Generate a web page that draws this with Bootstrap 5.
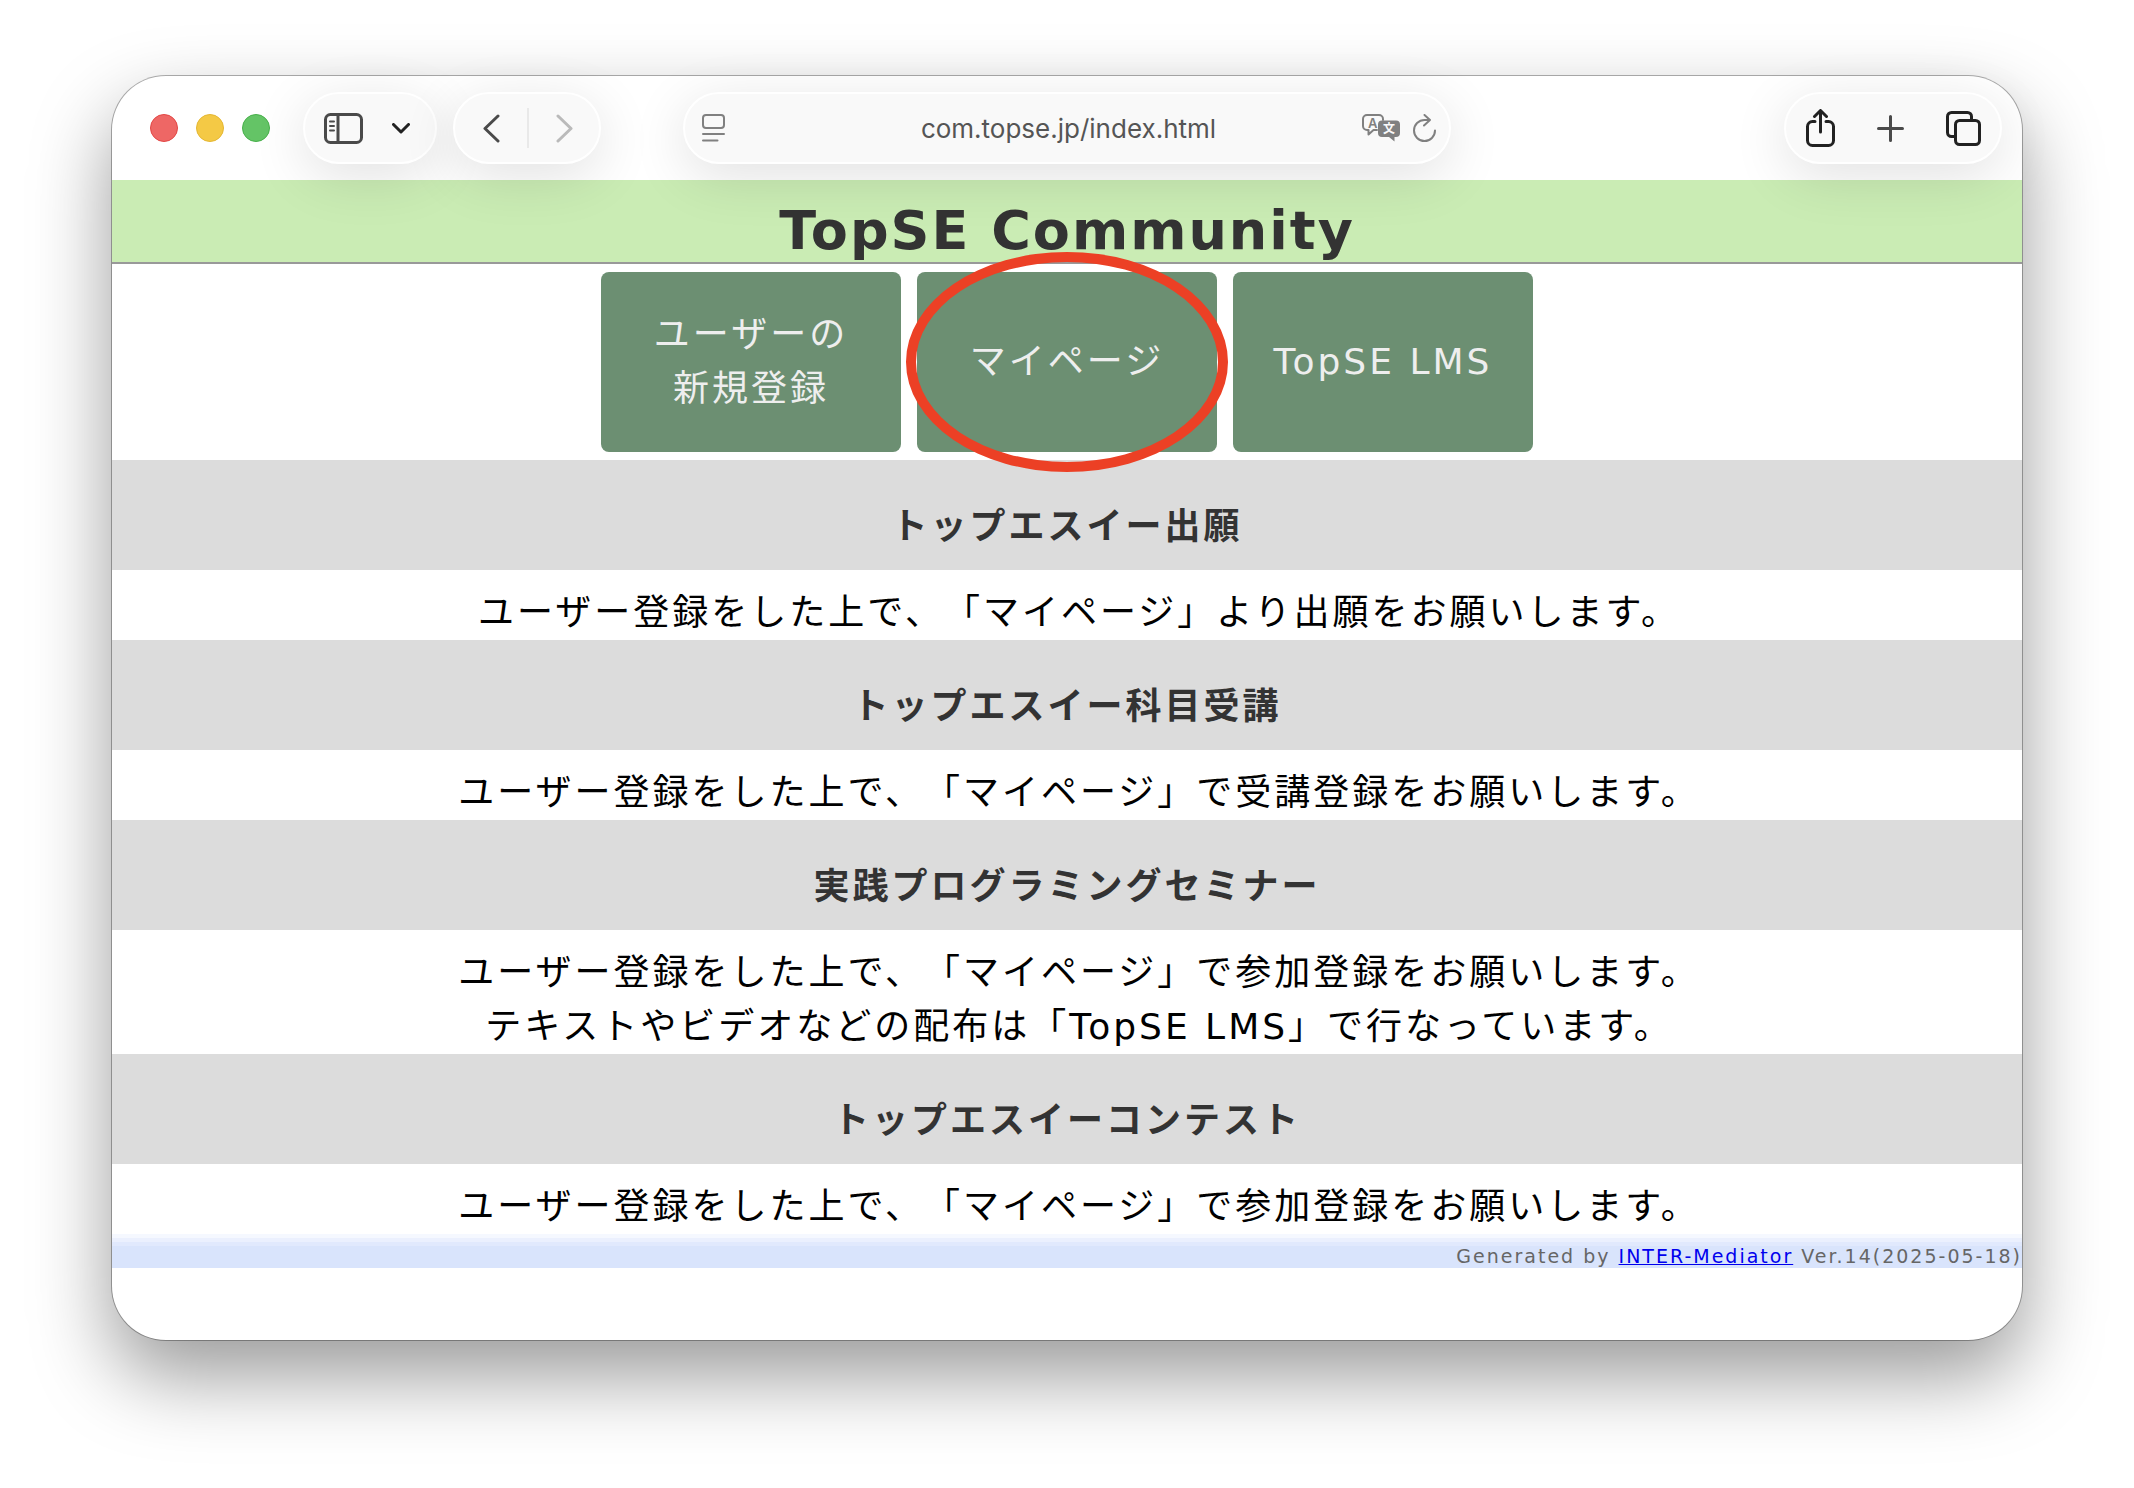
<!DOCTYPE html>
<html lang="ja">
<head>
<meta charset="utf-8">
<meta name="viewport" content="width=device-width, initial-scale=1">
<title>TopSE Community</title>
<link href="https://cdn.jsdelivr.net/npm/bootstrap@5.3.0/dist/css/bootstrap.min.css" rel="stylesheet">
<style>
  body {
    padding: 76px 112px 148px;
    background: #fff;
    color: #000;
    font-family: "DejaVu Sans", "Noto Sans CJK JP", sans-serif;
    font-size: 36px;
    line-height: 54px;
    letter-spacing: 3px;
    text-spacing-trim: space-all;
    font-feature-settings: "chws" 0, "halt" 0;
  }
  svg { display: block; fill: none; stroke-linecap: round; stroke-linejoin: round; }

  .browser {
    border-radius: 54px;
    padding-bottom: 72px;
    background: #fff;
    box-shadow: 0 0 0 1px rgba(0, 0, 0, .3), 0 36px 80px rgba(0, 0, 0, .4);
  }

  /* toolbar */
  .toolbar {
    display: grid;
    grid-template-columns: 1fr minmax(0, 768px) 1fr;
    padding: 16px 20px;
    letter-spacing: 0;
  }
  .lights { gap: 18px; margin: 0 33px 0 18px; }
  .light { width: 28px; height: 28px; border-radius: 50%; border: 1px solid; padding: 0; }
  .light-close { background: #ee6765; border-color: #e34745; }
  .light-min { background: #f4c945; border-color: #e5b732; }
  .light-zoom { background: #64c466; border-color: #47b04a; }
  .pill {
    height: 72px;
    border: 2px solid #fff;
    border-radius: 36px;
    background: #f9f9f9;
    box-shadow: 0 12px 56px rgba(0, 0, 0, .12);
  }
  .pill button { border: 0; padding: 0; background: none; }
  .pill-side { padding: 0 25px 0 19px; gap: 29px; }
  .pill-nav { padding: 0 26px 0 28px; gap: 27px; margin-left: 16px; }
  .pill-nav .rule { width: 2px; height: 40px; background: #e9e9e9; }
  .pill-url { padding: 0 13px 0 17px; gap: 13px; }
  .pill-url input {
    min-width: 0;
    border: 0;
    padding: 2px 0 0 50px;
    background: none;
    color: #555;
    font: 26px/40px Inter, sans-serif;
    text-align: center;
  }
  .pill-tools { padding: 0 19px 0 20px; gap: 42px; }

  /* page */
  .masthead {
    height: 84px;
    padding-top: 20px;
    background: #caecb4;
    border-bottom: 2px solid #999;
  }
  .masthead h1 { font-size: 54px; line-height: 62px; font-weight: 700; letter-spacing: 2px; color: #333; margin: 0; }
  .menu { gap: 16px; padding: 8px 0; }
  .menu-btn, .menu-btn:hover {
    width: 300px;
    height: 180px;
    border-radius: 8px;
    background: #6c8f72;
    color: #eee;
    text-decoration: none;
    text-align: center;
  }
  .ring {
    width: 322px;
    height: 220px;
    border: 10px solid #ec4025;
    border-radius: 50%;
    z-index: 3;
    pointer-events: none;
  }
  .topic h2 {
    margin: 0;
    padding: 40px 0 16px;
    background: #dcdcdc;
    color: #333;
    font-size: 36px;
    line-height: 54px;
    font-weight: 700;
  }
  /* the left padding balances the blank half of the closing full stop */
  .topic p { margin: 0; padding: 16px 0 0 24px; }
  .credit {
    height: 34px;
    padding-top: 10px;
    background: linear-gradient(#f5f8ff 4px, #ebf0fe 4px 8px, #e1e9fd 8px 12px, #d9e4fc 12px);
    color: #666;
    font-size: 19px;
    line-height: 24px;
    letter-spacing: 2px;
  }
  .credit a { color: #00e; }
</style>
</head>
<body>
<div class="browser">
  <header class="toolbar position-relative">
    <div class="d-flex align-items-center">
      <div class="lights d-flex">
        <button class="light light-close" aria-label="閉じる"></button>
        <button class="light light-min" aria-label="最小化"></button>
        <button class="light light-zoom" aria-label="拡大"></button>
      </div>
      <div class="pill pill-side d-flex align-items-center">
        <button aria-label="サイドバー">
          <svg width="39" height="31" stroke="#4a4a4a" stroke-width="3"><rect x="1.5" y="1.5" width="36" height="28" rx="5"/><path d="M14 2v27"/><path stroke-width="2" d="M6 8.500h4M6 13h4M6 17.500h4"/></svg>
        </button>
        <button aria-label="タブグループ">
          <svg width="18" height="11" stroke="#222" stroke-width="3"><path d="M1.500 1.500 9 9l7.500-7.500"/></svg>
        </button>
      </div>
      <div class="pill pill-nav d-flex align-items-center">
        <button aria-label="戻る">
          <svg width="17" height="29" stroke="#4a4a4a" stroke-width="3"><path d="M15 2 2 14.500 15 27"/></svg>
        </button>
        <span class="rule"></span>
        <button aria-label="進む">
          <svg width="17" height="29" stroke="#bababa" stroke-width="3"><path d="M2 2l13 12.500L2 27"/></svg>
        </button>
      </div>
    </div>
    <div class="pill pill-url d-flex align-items-center">
      <button aria-label="ページメニュー">
        <svg width="23" height="28" stroke="#808080" stroke-width="2"><rect x="1" y="1" width="21" height="13" rx="3"/><path d="M1 20h21M1 26.500h14.500"/></svg>
      </button>
      <input class="flex-grow-1" type="text" aria-label="アドレス" value="com.topse.jp/index.html">
      <button aria-label="翻訳">
        <svg width="38" height="28" stroke="#808080" stroke-width="2">
          <path d="M21 6V5a4 4 0 0 0-4-4H5a4 4 0 0 0-4 4v7a4 4 0 0 0 4 4h1.500v4.500L11.500 16H15"/>
          <path fill="#808080" stroke="none" d="M20 6.500h14a4 4 0 0 1 4 4V19a4 4 0 0 1-4 4h-1.500v4.500L27 23h-7a4 4 0 0 1-4-4v-8.500a4 4 0 0 1 4-4z"/>
          <text x="6" y="13.500" font-family="Inter, sans-serif" font-size="13" font-weight="600" fill="#808080" stroke="none">A</text>
          <text x="21" y="19" font-family="Noto Sans CJK JP, sans-serif" font-size="12" font-weight="700" fill="#f9f9f9" stroke="none">文</text>
        </svg>
      </button>
      <button aria-label="再読み込み">
        <svg width="23" height="28" stroke="#808080" stroke-width="2"><path d="M22 16.500A10.500 10.500 0 1 1 11.500 6H17M11.500 1l5.500 5-6 5.500"/></svg>
      </button>
    </div>
    <div class="d-flex justify-content-end">
      <div class="pill pill-tools d-flex align-items-center">
        <button aria-label="共有">
          <svg width="29" height="38" stroke="#222" stroke-width="3"><path d="M9 12.500H6.500a5 5 0 0 0-5 5v14a5 5 0 0 0 5 5h16a5 5 0 0 0 5-5v-14a5 5 0 0 0-5-5H20M14.500 23V2M8.500 7.500l6-6 6 6"/></svg>
        </button>
        <button aria-label="新規タブ">
          <svg width="27" height="27" stroke="#4a4a4a" stroke-width="3"><path d="M13.500 1.500v24M1.500 13.500h24"/></svg>
        </button>
        <button aria-label="タブ一覧">
          <svg width="35" height="35" stroke="#222" stroke-width="3"><rect x="9.500" y="9.500" width="24" height="24" rx="4"/><path d="M9 25.500H5.500a4 4 0 0 1-4-4v-16a4 4 0 0 1 4-4h16a4 4 0 0 1 4 4V9"/></svg>
        </button>
      </div>
    </div>
  </header>

  <main class="text-center">
    <div class="masthead"><h1>TopSE Community</h1></div>
    <nav class="menu d-flex justify-content-center">
      <a class="menu-btn d-flex align-items-center justify-content-center" href="#">ユーザーの<br>新規登録</a>
      <a class="menu-btn d-flex align-items-center justify-content-center position-relative" href="#">マイページ<span class="ring position-absolute top-50 start-50 translate-middle"></span></a>
      <a class="menu-btn d-flex align-items-center justify-content-center" href="#">TopSE LMS</a>
    </nav>
    <section class="topic">
      <h2>トップエスイー出願</h2>
      <p>ユーザー登録をした上で、「マイページ」より出願をお願いします。</p>
    </section>
    <section class="topic">
      <h2>トップエスイー科目受講</h2>
      <p>ユーザー登録をした上で、「マイページ」で受講登録をお願いします。</p>
    </section>
    <section class="topic">
      <h2>実践プログラミングセミナー</h2>
      <p>ユーザー登録をした上で、「マイページ」で参加登録をお願いします。<br>テキストやビデオなどの配布は「TopSE LMS」で行なっています。</p>
    </section>
    <section class="topic">
      <h2>トップエスイーコンテスト</h2>
      <p>ユーザー登録をした上で、「マイページ」で参加登録をお願いします。</p>
    </section>
  </main>
  <footer class="credit text-end">Generated by <a href="#">INTER-Mediator</a> Ver.14(2025-05-18)</footer>
</div>
<script src="https://cdn.jsdelivr.net/npm/bootstrap@5.3.0/dist/js/bootstrap.bundle.min.js"></script>
</body>
</html>
